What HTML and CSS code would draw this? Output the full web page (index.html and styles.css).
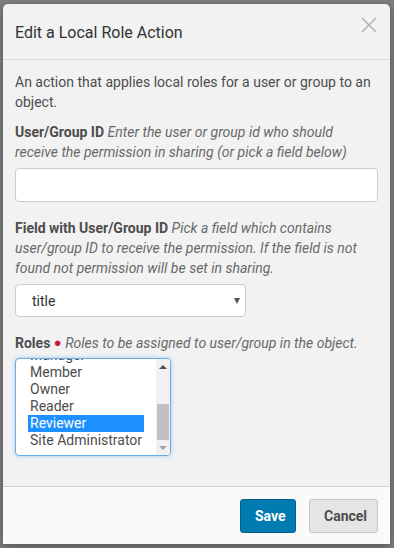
FILE: index.html
```html
<!DOCTYPE html>
<html lang="en">

<head>
  <meta charset="utf-8" />
  <title>Edit a Local Role Action</title>
  <link rel="stylesheet" href="styles.css">
</head>

<body>
  <div class="modal">
    <div class="modal-header">
      <h2>Edit a Local Role Action</h2>
      <button class="close" type="button" aria-label="Close">
        <svg width="16" height="16" viewBox="0 0 16 16">
          <path d="M1 1 L15 15 M15 1 L1 15" stroke="#b3b3b3" stroke-width="1.6" fill="none" />
        </svg>
      </button>
    </div>

    <form class="modal-body">
      <p class="description">An action that applies local roles for a user or group to an object.</p>

      <div class="field">
        <label for="principal">User/Group ID <span class="help">Enter the user or group id who should receive the permission in sharing (or pick a field below)</span></label>
        <input type="text" id="principal" name="principal" />
      </div>

      <div class="field">
        <label for="fieldname">Field with User/Group ID <span class="help">Pick a field which contains user/group ID to receive the permission. If the field is not found not permission will be set in sharing.</span></label>
        <div class="select-wrap">
          <select id="fieldname" name="fieldname">
            <option>title</option>
          </select>
          <span class="caret"></span>
        </div>
      </div>

      <div class="field">
        <label id="roles-label">Roles <span class="required">&#9679;</span> <span class="help">Roles to be assigned to user/group in the object.</span></label>
        <div class="roles-box">
          <ul id="roles" class="roles" role="listbox" aria-labelledby="roles-label" aria-multiselectable="true">
            <li role="option">Anonymous</li>
            <li role="option">Authenticated</li>
            <li role="option">Contributor</li>
            <li role="option">Editor</li>
            <li role="option">Manager</li>
            <li role="option">Member</li>
            <li role="option">Owner</li>
            <li role="option">Reader</li>
            <li role="option" class="selected" aria-selected="true">Reviewer</li>
            <li role="option">Site Administrator</li>
          </ul>
          <div class="scrollbar">
            <span class="sb-btn"><span class="arrow-up"></span></span>
            <span class="sb-track"><span class="sb-thumb"></span></span>
            <span class="sb-btn"><span class="arrow-down"></span></span>
          </div>
        </div>
      </div>
    </form>

    <div class="modal-footer">
      <button class="btn btn-primary" type="button">Save</button>
      <button class="btn btn-default" type="button">Cancel</button>
    </div>
  </div>

  <script src="script.js"></script>
</body>

</html>
```

FILE: styles.css
```css
* {
  box-sizing: border-box;
}

html,
body {
  height: 100%;
}

body {
  margin: 0;
  padding: 4px 4px 4px 3px;
  background: #7d7d7d;
  font-family: Roboto, "Liberation Sans", sans-serif;
  font-size: 14px;
  line-height: 20px;
  color: #4d4d4d;
}

.modal {
  height: 100%;
  display: flex;
  flex-direction: column;
  background: #f2f2f2;
  border-radius: 5px 5px 0 0;
  box-shadow: 0 3px 9px rgba(0, 0, 0, 0.3);
}

.modal-header {
  display: flex;
  justify-content: space-between;
  align-items: flex-start;
  padding: 19px 12px 0 12px;
  height: 56px;
  border-bottom: 1px solid #dcdcdc;
}

.modal-header h2 {
  margin: 0;
  font-size: 16px;
  font-weight: 400;
  line-height: 20px;
  color: #333;
}

.close {
  background: none;
  border: none;
  padding: 0;
  margin: -6px 1px 0 0;
  cursor: pointer;
}

.modal-body {
  flex: 1;
  padding: 12px 12px 0 12px;
}

.description {
  margin: 0 0 10px;
}

.field {
  margin-bottom: 16px;
}

label {
  display: block;
  margin-bottom: 6px;
  font-weight: 700;
  color: #4d4d4d;
}

.help {
  font-weight: 400;
  font-style: italic;
  color: #696969;
}

.required {
  color: #c4183c;
  font-size: 13px;
  font-style: normal;
  vertical-align: 1px;
}

input[type="text"] {
  display: block;
  width: 100%;
  height: 34px;
  padding: 6px 12px;
  border: 1px solid #ccc;
  border-radius: 4px;
  background: #fff;
  font: inherit;
}

.select-wrap {
  position: relative;
  width: 231px;
}

.select-wrap select {
  display: block;
  width: 100%;
  height: 33px;
  padding: 6px 12px 6px 16px;
  border: 1px solid #ccc;
  border-radius: 4px;
  background: #fff;
  font: inherit;
  color: #333;
  appearance: none;
  -webkit-appearance: none;
}

.caret {
  position: absolute;
  right: 6px;
  top: 14px;
  border-left: 3.5px solid transparent;
  border-right: 3.5px solid transparent;
  border-top: 6px solid #555;
  pointer-events: none;
}

/* list box with a drawn scrollbar */
.roles-box {
  display: flex;
  width: 156px;
  height: 98px;
  margin-top: -1px;
  border: 1px solid #66afe9;
  border-radius: 4px;
  background: #fff;
  box-shadow: 0 0 4px rgba(102, 175, 233, 0.6);
  overflow: hidden;
}

.roles {
  flex: 1;
  height: 96px;
  margin: 0;
  padding: 6px 12px;
  list-style: none;
  overflow: hidden;
  font-size: 14px;
  line-height: 17px;
  color: #4d4d4d;
}

.roles li {
  padding: 0 2px;
  height: 17px;
  white-space: nowrap;
}

.roles li.selected {
  background: #1e90ff;
  color: #fff;
}

.scrollbar {
  display: flex;
  flex-direction: column;
  width: 14px;
  background: #f1f1f1;
}

.sb-btn {
  display: flex;
  justify-content: center;
  align-items: center;
  height: 15px;
}

.sb-track {
  flex: 1;
  display: flex;
  flex-direction: column;
  justify-content: flex-end;
  padding: 0 1px;
}

.sb-thumb {
  height: 36px;
  background: #c1c1c1;
}

.arrow-up {
  border-left: 4px solid transparent;
  border-right: 4px solid transparent;
  border-bottom: 4px solid #505050;
}

.arrow-down {
  border-left: 4px solid transparent;
  border-right: 4px solid transparent;
  border-top: 4px solid #a3a3a3;
}

.modal-footer {
  display: flex;
  justify-content: flex-end;
  gap: 13px;
  padding: 12px 12px 0 12px;
  height: 58px;
  background: #fafafa;
  border-top: 1px solid #d0d0d0;
}

.btn {
  height: 34px;
  padding: 0 14px;
  border-radius: 3px;
  font-family: Roboto, "Liberation Sans", sans-serif;
  font-size: 14px;
  font-weight: 700;
  cursor: pointer;
}

.btn-primary {
  width: 56px;
  background: #007bb1;
  border: 1px solid #00608a;
  color: #fff;
}

.btn-default {
  width: 69px;
  background: #e5e5e5;
  border: 1px solid #c7c7c7;
  color: #4d4d4d;
}
```

FILE: script.js
```js
var roles = document.getElementById("roles");
roles.scrollTop = roles.scrollHeight;
```
